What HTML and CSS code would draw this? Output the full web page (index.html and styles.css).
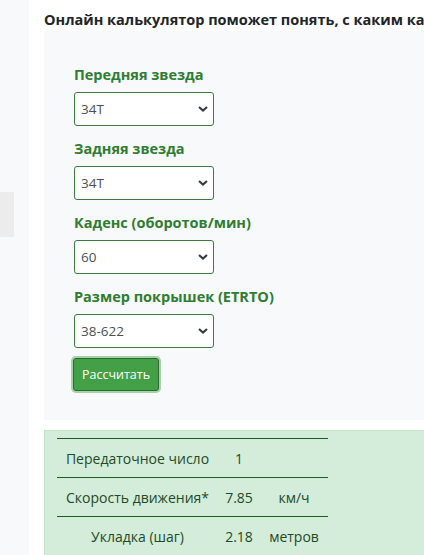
FILE: index.html
```html
<!DOCTYPE html>
<html lang="ru">
<head>
<meta charset="utf-8">
<link rel="stylesheet" href="styles.css">
</head>
<body>
<div class="page">
  <aside class="sidebar"><div class="side-box"></div></aside>
  <main class="main">
    <h2 class="title">Онлайн калькулятор поможет понять, с каким каденсом и скоростью вы поедете</h2>
    <form class="calc">
      <div class="group">
        <label class="label">Передняя звезда</label>
        <div class="select-wrap">
          <select class="select"><option>34T</option></select>
          <svg class="chev" width="10" height="6" viewBox="0 0 10 6"><path d="M1 1l4 3.6L9 1" fill="none" stroke="#343a40" stroke-width="2"/></svg>
        </div>
      </div>
      <div class="group">
        <label class="label">Задняя звезда</label>
        <div class="select-wrap">
          <select class="select"><option>34T</option></select>
          <svg class="chev" width="10" height="6" viewBox="0 0 10 6"><path d="M1 1l4 3.6L9 1" fill="none" stroke="#343a40" stroke-width="2"/></svg>
        </div>
      </div>
      <div class="group">
        <label class="label">Каденс (оборотов/мин)</label>
        <div class="select-wrap">
          <select class="select"><option>60</option></select>
          <svg class="chev" width="10" height="6" viewBox="0 0 10 6"><path d="M1 1l4 3.6L9 1" fill="none" stroke="#343a40" stroke-width="2"/></svg>
        </div>
      </div>
      <div class="group group-last">
        <label class="label">Размер покрышек (ETRTO)</label>
        <div class="select-wrap">
          <select class="select"><option>38-622</option></select>
          <svg class="chev" width="10" height="6" viewBox="0 0 10 6"><path d="M1 1l4 3.6L9 1" fill="none" stroke="#343a40" stroke-width="2"/></svg>
        </div>
      </div>
      <button type="button" class="btn">Рассчитать</button>
    </form>
    <div class="result">
      <table class="res-table">
        <tr><td class="c1">Передаточное число</td><td class="c2">1</td><td class="c3"></td></tr>
        <tr><td class="c1">Скорость движения*</td><td class="c2">7.85</td><td class="c3">км/ч</td></tr>
        <tr><td class="c1">Укладка (шаг)</td><td class="c2">2.18</td><td class="c3">метров</td></tr>
      </table>
    </div>
  </main>
</div>
</body>
</html>
```

FILE: styles.css
```css
html, body {
  margin: 0;
  padding: 0;
  overflow: hidden;
  background: #fff;
}
body {
  font-family: "Open Sans", "Noto Sans", sans-serif;
  color: #212529;
}
.page {
  display: flex;
  width: 424px;
  height: 555px;
  gap: 15px;
}
.sidebar {
  width: 29px;
  flex: none;
  background: #f8f9fa;
}
.side-box {
  margin-top: 192px;
  width: 14px;
  height: 45px;
  background: #ececec;
}
.main {
  flex: 1;
  min-width: 0;
  overflow: hidden;
}
.title {
  margin: 0;
  padding-top: 8px;
  font-size: 14.5px;
  line-height: 23px;
  font-weight: 700;
  white-space: nowrap;
  color: #212529;
}
.calc {
  background: #f8f9fa;
  padding: 33px 30px 29px;
  margin: 0;
}
.group {
  margin-bottom: 12px;
}
.group-last {
  margin-bottom: 10px;
}
.label {
  display: block;
  font-size: 14.5px;
  line-height: 22px;
  font-weight: 700;
  color: #2e7d32;
  margin-bottom: 6px;
}
.select-wrap {
  position: relative;
  width: 140px;
}
.select {
  appearance: none;
  -webkit-appearance: none;
  display: block;
  width: 140px;
  height: 34px;
  box-sizing: border-box;
  border: 1px solid #3b7d3f;
  border-radius: 3px;
  background: #fff;
  padding: 0 24px 0 6px;
  font-family: inherit;
  font-size: 13.5px;
  color: #495057;
}
.chev {
  position: absolute;
  right: 6px;
  top: 14px;
}
.btn {
  display: block;
  margin: 0 0 0 -1px;
  height: 33px;
  padding: 0 8px;
  font-family: inherit;
  font-size: 12.5px;
  color: #fff;
  background: #43a047;
  border: 1px solid #2a6a2d;
  border-radius: 3px;
  box-shadow: 0 0 0 2px rgba(67,160,71,0.45);
}
.result {
  margin-top: 10px;
  background: #d4edda;
  border: 1px solid #c3e6cb;
  border-right: none;
  padding: 7px 12px 20px;
}
.res-table {
  border-collapse: collapse;
  width: 271px;
  font-size: 14px;
  color: #1e4a26;
}
.res-table td {
  border-top: 1px solid #1b5e20;
  height: 38px;
  padding: 0;
  text-align: center;
}
.c1 { width: 161px; }
.c2 { width: 42px; }
.c3 { width: 68px; }
```
